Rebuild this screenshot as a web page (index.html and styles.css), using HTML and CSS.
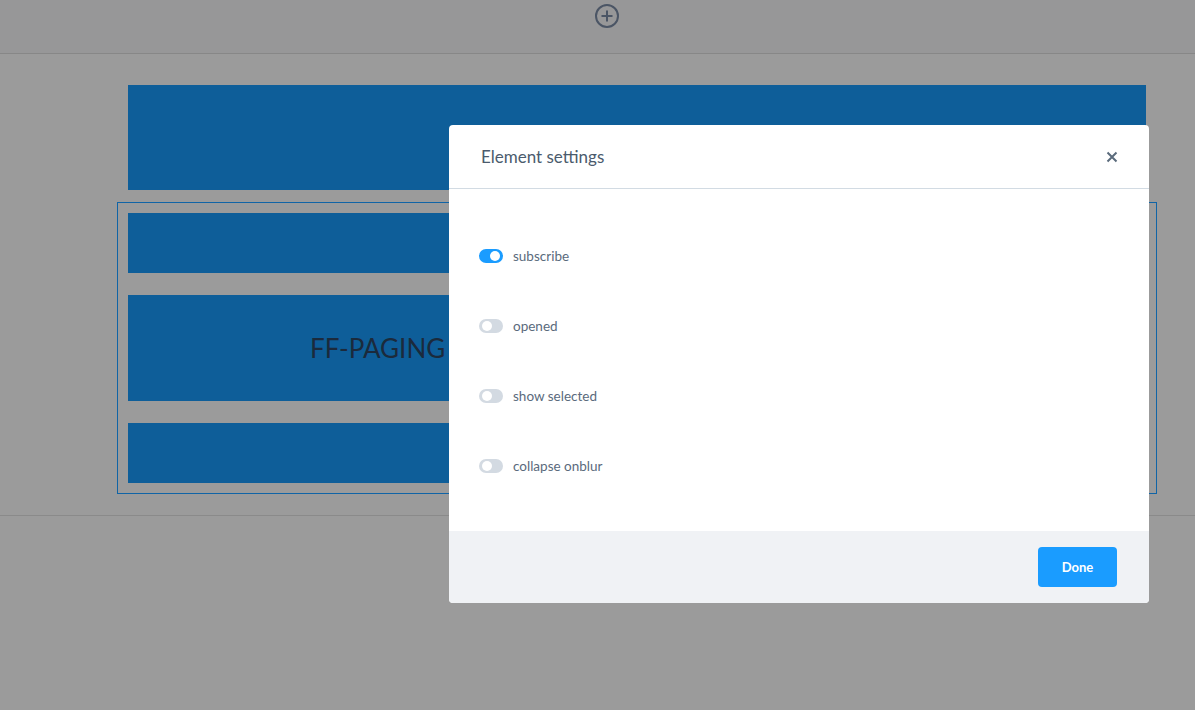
FILE: index.html
```html
<!DOCTYPE html>
<html>
<head>
<meta charset="utf-8">
<link rel="stylesheet" href="styles.css">
</head>
<body>
<div class="topbar">
  <svg class="add" width="26" height="26" viewBox="0 0 26 26">
    <circle cx="13" cy="13" r="11" fill="none" stroke="#4b5565" stroke-width="2"/>
    <path d="M13 7.5v11M7.5 13h11" stroke="#4b5565" stroke-width="2" fill="none"/>
  </svg>
</div>
<div class="content">
  <div class="block block-lg outer"></div>
  <div class="selection">
    <div class="block block-sm"></div>
    <div class="block block-lg paging">FF-PAGING</div>
    <div class="block block-sm"></div>
  </div>
  <div class="rule"></div>
</div>

<div class="modal">
  <div class="modal-header">
    <span class="modal-title">Element settings</span>
    <svg class="close" width="12" height="12" viewBox="0 0 12 12">
      <path d="M1.5 1.5l9 9M10.5 1.5l-9 9" stroke="#5b6b7c" stroke-width="2" fill="none"/>
    </svg>
  </div>
  <div class="modal-body">
    <div class="row"><span class="toggle on"></span><span class="label">subscribe</span></div>
    <div class="row"><span class="toggle"></span><span class="label">opened</span></div>
    <div class="row"><span class="toggle"></span><span class="label">show selected</span></div>
    <div class="row"><span class="toggle"></span><span class="label">collapse onblur</span></div>
  </div>
  <div class="modal-footer">
    <button class="done">Done</button>
  </div>
</div>
</body>
</html>
```
FILE: styles.css
```css
html, body {
  margin: 0;
  padding: 0;
  background: #9b9b9b;
  font-family: "Lato", "Open Sans", sans-serif;
  height: 710px;
  overflow: hidden;
}
.topbar {
  height: 53px;
  background: #979798;
  border-bottom: 1px solid #878787;
  display: flex;
  justify-content: center;
  align-items: flex-start;
}
.add {
  margin-top: 3px;
  margin-left: 19px;
}
.content {
  padding: 31px 38px 0 117px;
}
.block {
  background: #0e5e99;
}
.outer {
  margin: 0 11px;
  height: 105px;
}
.block-sm {
  height: 60px;
}
.selection {
  margin-top: 12px;
  border: 1px solid #1064a6;
  padding: 10px;
  display: flex;
  flex-direction: column;
  gap: 22px;
}
.selection .block-lg {
  height: 106px;
}
.paging {
  display: flex;
  align-items: center;
  padding-left: 182px;
  font-size: 26px;
  color: #1b2a3c;
  font-weight: 400;
  padting-top: 2px;
  box-sizing: border-box;
}
.rule {
  margin: 21px -38px 0 -117px;
  border-top: 1px solid #8a8a8a;
}
.modal {
  position: absolute;
  left: 449px;
  top: 125px;
  width: 700px;
  height: 478px;
  background: #fff;
  border-radius: 4px;
  display: flex;
  flex-direction: column;
  overflow: hidden;
}
.modal-header {
  height: 64px;
  border-bottom: 1px solid #d2dbe3;
  display: flex;
  align-items: center;
  justify-content: space-between;
  padding: 0 31px 0 32px;
  box-sizing: border-box;
  flex: none;
}
.modal-title {
  font-size: 17px;
  color: #4b5b6d;
}
.modal-body {
  flex: 1;
  padding: 32px 30px 29px 30px;
  display: flex;
  flex-direction: column;
}
.row {
  height: 70px;
  display: flex;
  align-items: center;
  gap: 10px;
}
.toggle {
  width: 24px;
  height: 14px;
  border-radius: 7px;
  background: #d3dae2;
  position: relative;
  flex: none;
}
.toggle::after {
  content: "";
  position: absolute;
  top: 2px;
  left: 3px;
  width: 10px;
  height: 10px;
  border-radius: 50%;
  background: #fff;
}
.toggle.on {
  background: #1a9cff;
}
.toggle.on::after {
  left: 11px;
}
.label {
  font-size: 13.5px;
  color: #5a6a7c;
}
.modal-footer {
  height: 72px;
  background: #f0f2f5;
  display: flex;
  align-items: center;
  justify-content: flex-end;
  padding-right: 32px;
  flex: none;
}
.done {
  width: 79px;
  height: 40px;
  border: none;
  border-radius: 4px;
  background: #1a9cff;
  color: #fff;
  font-family: "Lato", "Open Sans", sans-serif;
  font-weight: 700;
  font-size: 13px;
}
```
